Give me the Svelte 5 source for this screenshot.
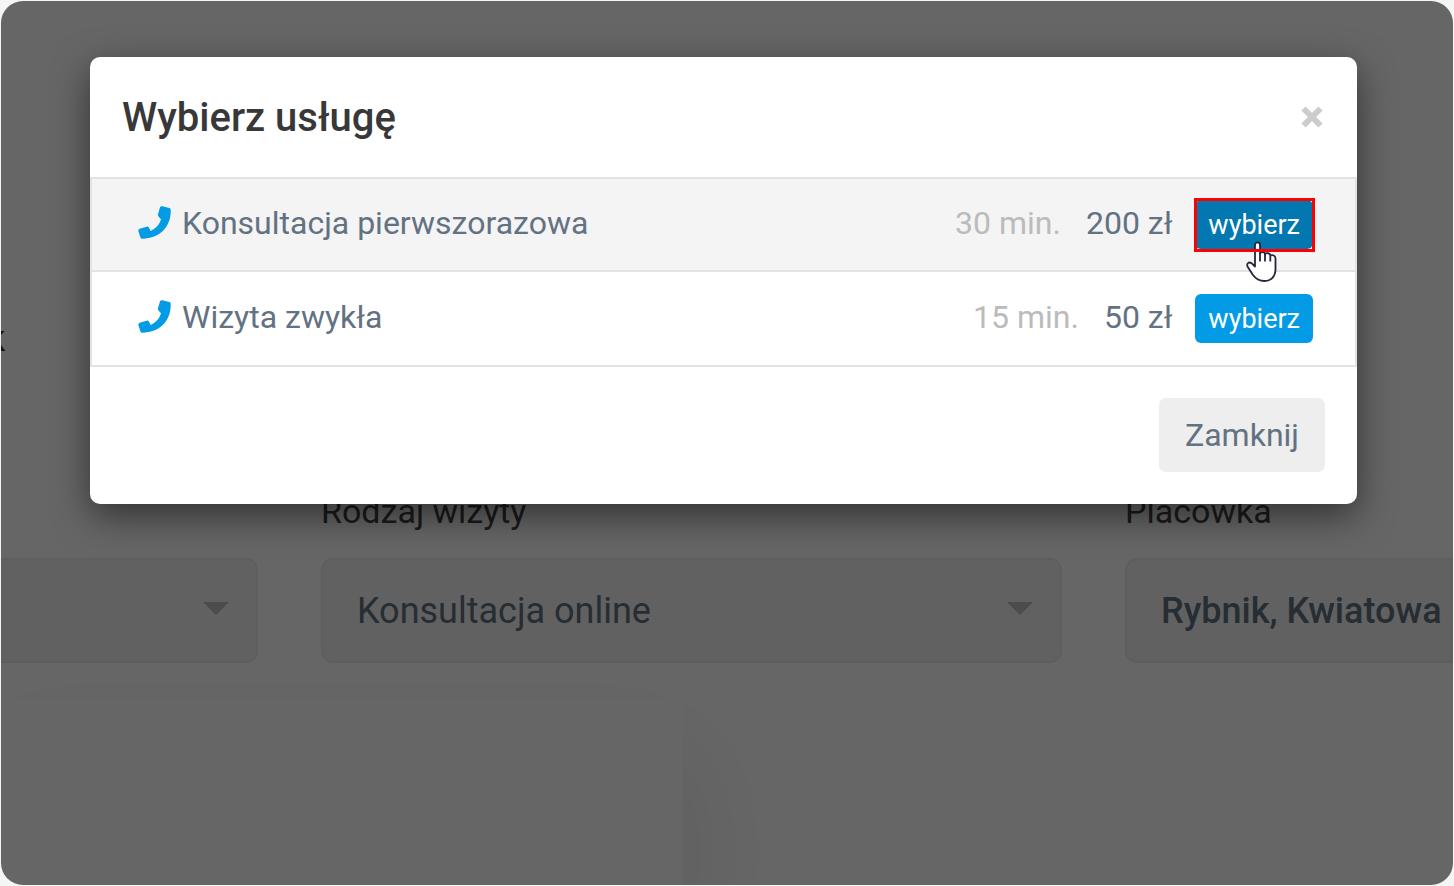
<script>
  const services = [
    { name: 'Konsultacja pierwszorazowa', time: '30 min.', price: '200 zł', active: true },
    { name: 'Wizyta zwykła', time: '15 min.', price: '50 zł', active: false }
  ];
</script>

<div class="frame">
  <main class="page">
    <p class="heading">k</p>
    <form class="filters">
      <div class="field cut-left">
        <select aria-label="Filtr"><option></option></select>
        <span class="caret"></span>
      </div>
      <div class="field">
        <label for="kind">Rodzaj wizyty</label>
        <select id="kind"><option>Konsultacja online</option></select>
        <span class="caret"></span>
      </div>
      <div class="field cut-right">
        <label for="place">Placówka</label>
        <select id="place"><option>Rybnik, Kwiatowa</option></select>
      </div>
    </form>
    <div class="card"></div>
  </main>

  <div class="backdrop">
    <div class="modal" role="dialog" aria-labelledby="title">
      <header>
        <h1 id="title">Wybierz usługę</h1>
        <button class="close" type="button" aria-label="Zamknij okno">
          <svg viewBox="0 0 22 22" width="22" height="22"><path d="M2.5 2.5 19.5 19.5M19.5 2.5 2.5 19.5" stroke="currentColor" stroke-width="6" /></svg>
        </button>
      </header>
      <ul>
        {#each services as s}
          <li class:active={s.active}>
            <svg class="phone" viewBox="14 11 99 99" aria-hidden="true"><path fill="currentColor" d="M80 15Q82 11 87 12L108 17Q112 18 112 22C113 42 108 62 94 80C77 100 54 109 26 109Q22 109 21 105L15 86Q14 81 19 79L40 73Q45 72 47 76L52 86C66 80 78 68 83 51L76 43Q73 40 74 36Z" /></svg>
            <span class="name">{s.name}</span>
            <span class="time">{s.time}</span>
            <span class="price">{s.price}</span>
            <span class="action">
              <button class="pick" type="button">wybierz</button>
              {#if s.active}
                <svg class="cursor" viewBox="0 0 32 42" width="32" height="42" aria-hidden="true">
                  <path d="M9 24V4C9 .6 14 .6 14 4V12.500C15 10.500 18.500 10.800 19 13C20.500 11.500 24 12 24.500 14.500C26.500 13.500 29.500 14.500 29.500 17.500V28C29.500 35.500 25 40 18.500 40C12 40 9.500 37.500 7 34L1.800 26C0 22.500 3 20.500 5.500 22.200L9 25.500Z" fill="#fff" stroke="#26263a" stroke-width="1.800" stroke-linejoin="round" />
                  <path d="M14 12V20.500M19 13V20.500M24.300 14.500V20.500" fill="none" stroke="#26263a" stroke-width="1.800" />
                </svg>
                <span class="marker"></span>
              {/if}
            </span>
          </li>
        {/each}
      </ul>
      <footer><button class="dismiss" type="button">Zamknij</button></footer>
    </div>
  </div>
</div>

<style>
  :global(body) { background: #f4f5f5; }
  * { box-sizing: border-box; }
  .frame {
    position: relative;
    margin: 1px;
    min-height: calc(100vh - 2px);
    border-radius: 22px;
    overflow: hidden;
    display: flex;
    background: #fff;
    font-family: Roboto, sans-serif;
    color: #444;
  }
  .page { flex: 1; min-width: 0; display: flex; flex-direction: column; padding-top: 316px; }
  .heading { margin: 0 0 129px -14px; font-size: 36px; line-height: 44px; color: #333; }
  .filters {
    display: grid;
    grid-template-columns: 257fr 741fr 328fr;
    gap: 63px;
    align-items: end;
  }
  .field { position: relative; min-width: 0; display: flex; flex-direction: column; gap: 26px; }
  label { font-size: 34px; line-height: 42px; white-space: nowrap; }
  select {
    appearance: none;
    width: 100%;
    height: 105px;
    padding: 0 34px;
    border: 2px solid #ebebeb;
    border-radius: 12px;
    background: #f3f3f3;
    font: 36px Roboto, sans-serif;
    color: #5f7080;
  }
  .cut-left select { border-left: 0; border-radius: 0 12px 12px 0; }
  .cut-right select { border-right: 0; border-radius: 12px 0 0 12px; padding-right: 0; font-weight: 500; }
  .caret {
    position: absolute;
    right: 29px;
    bottom: 48px;
    border: 13px solid transparent;
    border-top-color: #bebebe;
    border-bottom: 0;
  }
  .card {
    flex: 1;
    width: 47%;
    margin-top: 36px;
    border-radius: 0 6px 0 0;
    background: #fff;
    box-shadow: 0 60px 110px rgba(0, 0, 0, 0.1);
  }
  .backdrop {
    position: absolute;
    inset: 0;
    padding: 56px 96px 56px 89px;
    background: rgba(0, 0, 0, 0.6);
  }
  .modal {
    border-radius: 10px;
    background: #fff;
    box-shadow: 0 12px 36px rgba(0, 0, 0, 0.5);
    color: #637282;
    font-size: 32px;
  }
  header { display: flex; align-items: center; justify-content: space-between; height: 120px; padding: 0 34px 0 32px; }
  h1 { margin: 0; font-size: 40px; font-weight: 500; color: #383838; }
  button { border: 0; font-family: inherit; cursor: pointer; }
  .close { display: flex; padding: 0; background: none; color: #ccc; }
  ul { margin: 0; padding: 0; list-style: none; border: 2px solid #e3e3e3; }
  li { display: flex; align-items: center; height: 93px; padding: 0 42px 0 46px; }
  li.active { background: #f4f4f4; border-bottom: 2px solid #e3e3e3; }
  .phone { width: 33px; height: 33px; margin: 0 11px 4px 0; color: #039be5; }
  .name, .time, .price { padding-bottom: 3px; }
  .name { flex: 1; }
  .time { margin-right: 25px; color: #bbb; }
  .price { margin-right: 23px; }
  .action { position: relative; display: flex; }
  .pick {
    height: 49px;
    padding: 0 13px;
    border-radius: 6px;
    background: #039be5;
    color: #fff;
    font-size: 27px;
  }
  .active .pick { background: #0277b0; }
  .marker { position: absolute; inset: -2px -2px -3px -1px; border: 3px solid #f00; pointer-events: none; }
  .cursor { position: absolute; left: 51px; top: 41px; pointer-events: none; }
  footer { display: flex; justify-content: flex-end; padding: 31px 32px 32px; }
  .dismiss {
    height: 74px;
    padding: 0 26px;
    border-radius: 7px;
    background: #eee;
    color: #637282;
    font-size: 32px;
  }
</style>
